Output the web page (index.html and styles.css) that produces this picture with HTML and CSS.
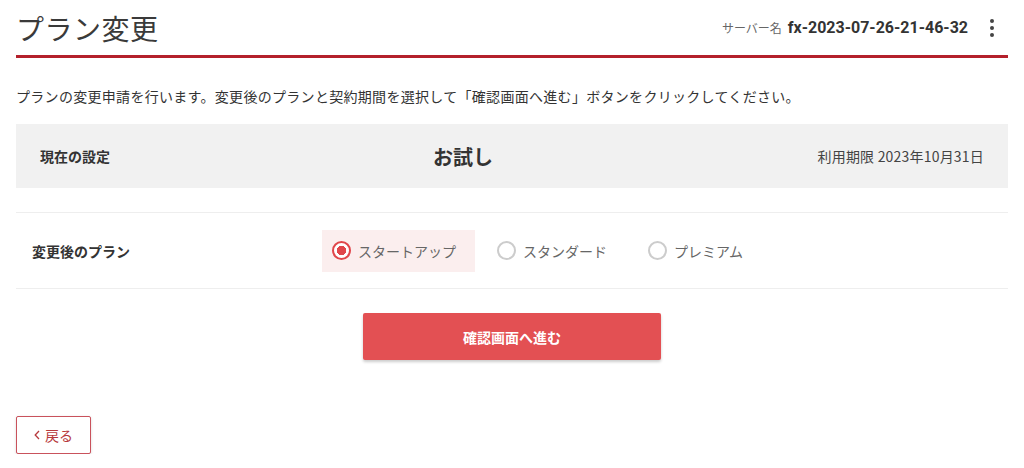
FILE: index.html
```html
<!DOCTYPE html>
<html lang="ja">
<head>
  <meta charset="UTF-8" />
  <meta name="viewport" content="width=device-width, initial-scale=1.0" />
  <title>プラン変更</title>
  <link rel="stylesheet" href="styles.css">
</head>
<body>
  <div class="page">
    <header class="header">
      <h1>プラン変更</h1>
      <div class="server">
        <span class="server-label">サーバー名</span>
        <span class="server-name">fx-2023-07-26-21-46-32</span>
        <span class="kebab"><i></i><i></i><i></i></span>
      </div>
    </header>

    <p class="lead">プランの変更申請を行います。変更後のプランと契約期間を選択して「確認画面へ進む」ボタンをクリックしてください。</p>

    <div class="current">
      <div class="current-label">現在の設定</div>
      <div class="current-plan">お試し</div>
      <div class="current-limit">利用期限 2023年10月31日</div>
    </div>

    <div class="plan-row">
      <div class="plan-label">変更後のプラン</div>
      <div class="options">
        <label class="option checked"><span class="radio"></span>スタートアップ</label>
        <label class="option"><span class="radio"></span>スタンダード</label>
        <label class="option"><span class="radio"></span>プレミアム</label>
      </div>
    </div>

    <div class="actions">
      <button class="submit">確認画面へ進む</button>
    </div>

    <button class="back">
      <svg width="6" height="10" viewBox="0 0 6 10"><path d="M5 1 L1.2 5 L5 9" fill="none" stroke="currentColor" stroke-width="1.3"/></svg>
      戻る
    </button>
  </div>
</body>
</html>
```

FILE: styles.css
```css
* { box-sizing: border-box; }

body {
  margin: 0;
  font-family: "Noto Sans CJK JP", "Noto Sans", sans-serif;
  color: #333;
  background: #fff;
}

.page {
  padding: 0 16px;
}

.header {
  display: flex;
  justify-content: space-between;
  align-items: center;
  height: 58px;
  border-bottom: 3px solid #b4202b;
}

h1 {
  margin: 0;
  font-size: 28px;
  font-weight: 400;
  color: #3a3a3a;
  letter-spacing: 0.5px;
}

.server {
  display: flex;
  align-items: center;
  padding-right: 14px;
}

.server-label {
  font-size: 12px;
  color: #666;
  margin-right: 6px;
}

.server-name {
  font-family: Roboto, "Liberation Sans", sans-serif;
  font-size: 16px;
  font-weight: 700;
  color: #333;
}

.kebab {
  display: flex;
  flex-direction: column;
  gap: 3px;
  margin-left: 22px;
}

.kebab i {
  width: 4px;
  height: 4px;
  border-radius: 50%;
  background: #444;
}

.lead {
  margin: 28px 0 18px;
  font-size: 14px;
  line-height: 20px;
  letter-spacing: 0.3px;
  color: #333;
}

.current {
  display: grid;
  grid-template-columns: 282px 282px 1fr;
  align-items: center;
  height: 64px;
  padding: 0 24px;
  background: #f1f1f1;
}

.current-label {
  font-size: 14px;
  font-weight: 700;
}

.current-plan {
  font-size: 20px;
  font-weight: 700;
  text-align: center;
}

.current-limit {
  font-size: 14px;
  letter-spacing: 0.2px;
  color: #444;
  text-align: right;
}

.plan-row {
  display: flex;
  align-items: center;
  height: 77px;
  margin-top: 24px;
  padding-left: 16px;
  border-top: 1px solid #eee;
  border-bottom: 1px solid #eee;
}

.plan-label {
  width: 290px;
  font-size: 14px;
  font-weight: 700;
}

.options {
  display: flex;
  gap: 12px;
}

.option {
  display: flex;
  align-items: center;
  height: 42px;
  padding: 0 19px 0 10px;
  font-size: 14px;
  color: #666;
  cursor: pointer;
}

.option.checked {
  background: #fbeeee;
}

.radio {
  width: 19px;
  height: 19px;
  margin-right: 7px;
  border: 2px solid #ccc;
  border-radius: 50%;
  background: #fff;
}

.option.checked .radio {
  border-color: #e0464a;
  background: radial-gradient(circle, #e0464a 0 4.5px, #fff 5px);
}

.actions {
  display: flex;
  justify-content: center;
  margin-top: 24px;
}

.submit {
  width: 298px;
  height: 47px;
  border: none;
  border-radius: 2px;
  background: #e35053;
  color: #fff;
  font-family: inherit;
  font-size: 14px;
  font-weight: 700;
  box-shadow: 0 2px 3px rgba(0, 0, 0, 0.2);
  cursor: pointer;
}

.back {
  display: flex;
  align-items: center;
  justify-content: center;
  gap: 5px;
  width: 75px;
  height: 38px;
  margin-top: 56px;
  border: 1px solid #c9525c;
  border-radius: 2px;
  background: #fff;
  color: #b73a3e;
  font-family: inherit;
  font-size: 14px;
  box-shadow: 0 1px 3px rgba(0, 0, 0, 0.15);
  cursor: pointer;
}
```
